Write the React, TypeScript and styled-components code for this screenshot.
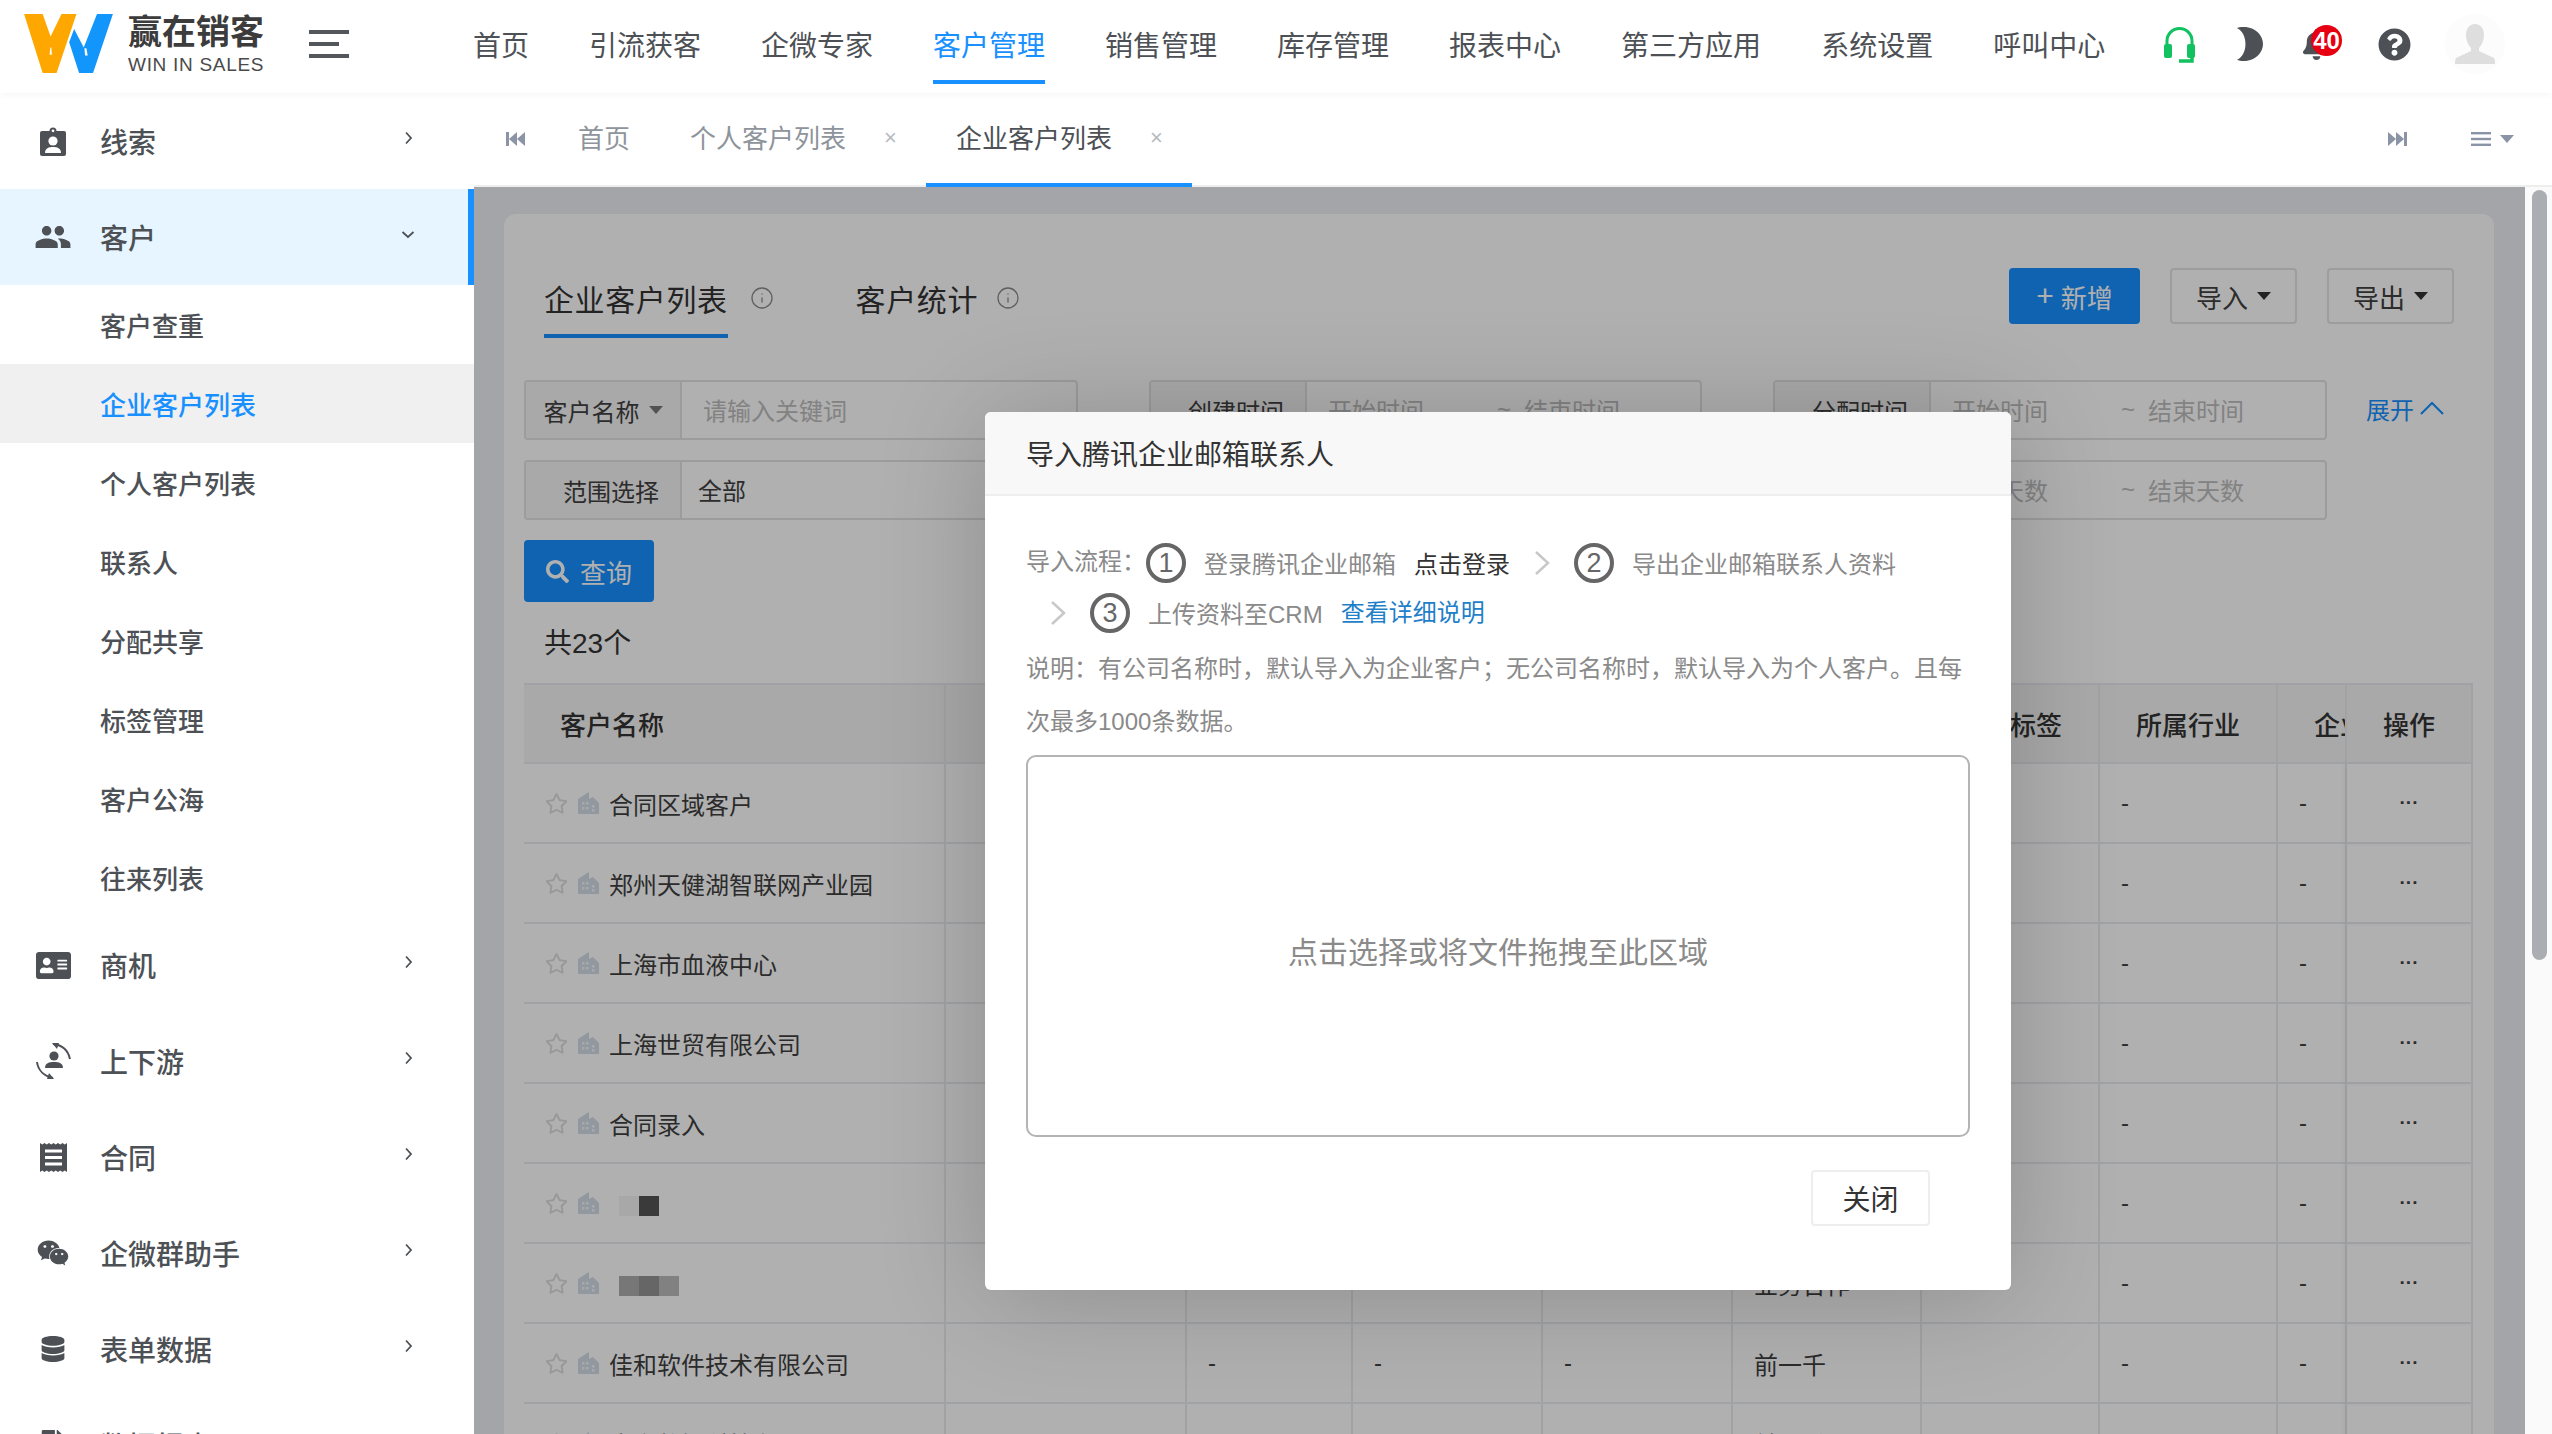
import { ReactElement, ReactNode } from "react";
import styled, { createGlobalStyle } from "styled-components";
import { FaAddressCard, FaBell, FaDatabase, FaFileAlt, FaQuestionCircle, FaRegStar, FaSearch, FaWeixin } from "react-icons/fa";
import { MdPeople } from "react-icons/md";
import { Info } from "lucide-react";

const PRIMARY = "#1890ff";
const INK = "#4d5156";

const NAV_ITEMS = ["首页", "引流获客", "企微专家", "客户管理", "销售管理", "库存管理", "报表中心", "第三方应用", "系统设置", "呼叫中心"];
const SUB_ITEMS = ["客户查重", "企业客户列表", "个人客户列表", "联系人", "分配共享", "标签管理", "客户公海", "往来列表"];
const COLUMNS = [422, 241, 166, 190, 190, 189, 178, 178, 69, 126];
const HEADERS = ["客户名称", "最新跟进时间", "跟进状态", "负责人", "创建人", "客户级别", "客户标签", "所属行业", "企业规模", "操作"];

type Row = { name?: string; mosaic?: string[]; level: string };

const ROWS: Row[] = [
    { name: "合同区域客户", level: "业务合作" },
    { name: "郑州天健湖智联网产业园", level: "业务合作" },
    { name: "上海市血液中心", level: "前一千" },
    { name: "上海世贸有限公司", level: "前一千" },
    { name: "合同录入", level: "业务合作" },
    { mosaic: ["#f4f4f4", "#545454"], level: "业务合作" },
    { mosaic: ["#adadad", "#949494", "#bcbcbc"], level: "业务合作" },
    { name: "佳和软件技术有限公司", level: "前一千" },
    { name: "南京数智科技有限公司", level: "前一千" },
];

const GlobalStyle = createGlobalStyle`
    html, body {
        margin: 0;
        padding: 0;
        height: 100%;
        overflow: hidden;
        background: #fff;
        font-family: "Liberation Sans", "Noto Sans CJK SC", sans-serif;
    }
    * {
        box-sizing: border-box;
    }
`;

function LogoMark(): ReactElement {
    return (
        <svg width="89" height="59" viewBox="42 27 268 178">
            <polygon fill="#fea700" points="42,27 98,27 122,95 155,27 200,27 140,205 98,205" />
            <polygon fill="#fff" points="119,150 126,150 124,128 121,128" />
            <polygon fill="#1396fb" points="178,112 193,72 222,128 262,27 310,27 250,205 208,205" />
            <polygon fill="#fff" points="226,152 234,152 230,130 224,130" />
        </svg>
    );
}

function Burger(): ReactElement {
    return (
        <svg width="40" height="28" viewBox="0 0 40 28" fill="#53565b">
            <rect width="40" height="4" />
            <rect y="12" width="30" height="4" />
            <rect y="24" width="40" height="4" />
        </svg>
    );
}

function Headset(): ReactElement {
    return (
        <svg width="31" height="37" viewBox="0 0 31 37">
            <path d="M3 21 V15 A12.5 12.5 0 0 1 28 15 V21" fill="none" stroke="#12c15f" strokeWidth="3" />
            <rect x="0" y="18" width="8" height="14" rx="2" fill="#12c15f" />
            <rect x="23" y="18" width="8" height="14" rx="2" fill="#12c15f" />
            <path d="M28 30 V35 H15" fill="none" stroke="#12c15f" strokeWidth="3.5" />
        </svg>
    );
}

function Moon(): ReactElement {
    return (
        <svg width="26" height="34" viewBox="262 70 76 98">
            <path fill={INK} d="M262 72 C300 60 338 85 338 119 C338 153 300 178 262 166 C295 150 295 88 262 72Z" />
        </svg>
    );
}

function Avatar(): ReactElement {
    return (
        <svg width="60" height="60" viewBox="0 0 60 60">
            <circle cx="30" cy="30" r="30" fill="#fcfcfc" />
            <path fill="#dedede" d="M30 10 C36 10 39 15 39 21 C39 27 36 32 34 34 V37 L49 44 C50 46 50 48 50 50 H10 C10 48 10 46 11 44 L26 37 V34 C24 32 21 27 21 21 C21 15 24 10 30 10Z" />
        </svg>
    );
}

function BadgeIcon(): ReactElement {
    return (
        <svg width="26" height="29" viewBox="0 0 26 29">
            <path fill={INK} d="M2 4 H9.5 A3.5 3.5 0 0 1 16.5 4 H24 A2 2 0 0 1 26 6 V27 A2 2 0 0 1 24 29 H2 A2 2 0 0 1 0 27 V6 A2 2 0 0 1 2 4Z" />
            <circle cx="13" cy="3.8" r="1.4" fill="#fff" />
            <circle cx="13" cy="14" r="4.6" fill="#fff" />
            <path fill="#fff" d="M5 26 C5 21 9 20 13 20 C17 20 21 21 21 26Z" />
        </svg>
    );
}

function FlowIcon(): ReactElement {
    return (
        <svg width="35" height="36" viewBox="0 0 35 36">
            <circle cx="18" cy="13" r="4.6" fill={INK} />
            <path fill={INK} d="M9 25 C9 20 13 19 18 19 C23 19 27 20 27 25Z" />
            <path d="M17 1 C26 2 32 7 34 16" fill="none" stroke={INK} strokeWidth="2" />
            <polygon fill={INK} points="16,0 23,0 21,6" />
            <path d="M1 19 C2 27 8 33 17 35" fill="none" stroke={INK} strokeWidth="2" />
            <polygon fill={INK} points="18,36 11,36 13,30" />
        </svg>
    );
}

function ReceiptIcon(): ReactElement {
    return (
        <svg width="27" height="29" viewBox="0 0 27 29">
            <path fill={INK} d="M0 0 L2.25 1.5 L4.5 0 L6.75 1.5 L9 0 L11.25 1.5 L13.5 0 L15.75 1.5 L18 0 L20.25 1.5 L22.5 0 L24.75 1.5 L27 0 V29 L24.75 27.5 L22.5 29 L20.25 27.5 L18 29 L15.75 27.5 L13.5 29 L11.25 27.5 L9 29 L6.75 27.5 L4.5 29 L2.25 27.5 L0 29Z" />
            <rect x="5" y="6.5" width="17" height="3" fill="#fff" />
            <rect x="5" y="13" width="17" height="3" fill="#fff" />
            <rect x="5" y="19.5" width="17" height="3" fill="#fff" />
        </svg>
    );
}

function BuildingIcon(): ReactElement {
    return (
        <svg width="21" height="22" viewBox="0 0 21 22">
            <path fill="#d3dde7" d="M0 22 V7 L11 0 V7 L15 5 L21 11 V22Z" />
            <g fill="#f2f5f8">
                <rect x="4" y="10" width="2.5" height="2.5" />
                <rect x="8" y="10" width="2.5" height="2.5" />
                <rect x="4" y="15" width="2.5" height="2.5" />
                <rect x="8" y="15" width="2.5" height="2.5" />
                <rect x="14" y="13" width="2.5" height="2.5" />
                <rect x="14" y="17" width="2.5" height="2.5" />
            </g>
        </svg>
    );
}

function SkipIcon({ flip }: { flip?: boolean }): ReactElement {
    return (
        <svg width="20" height="14" viewBox="0 0 20 14" fill="#8a94a6" style={flip ? { transform: "scaleX(-1)" } : undefined}>
            <rect x="0" y="0" width="3" height="14" />
            <polygon points="11,0 11,14 3,7" />
            <polygon points="19,0 19,14 11,7" />
        </svg>
    );
}

function Chevron({ open }: { open?: boolean }): ReactElement {
    return (
        <ChevronSlot>
            <svg width="14" height="14" viewBox="0 0 14 14" fill="none" stroke={INK} strokeWidth="1.8" style={open ? { transform: "rotate(90deg)" } : undefined}>
                <path d="M5 1.5 L10 7 L5 12.5" />
            </svg>
        </ChevronSlot>
    );
}

function MenuRow({ icon, label, open, active }: { icon: ReactNode; label: string; open?: boolean; active?: boolean }): ReactElement {
    return (
        <SideItem $active={active}>
            <SideIcon>{icon}</SideIcon>
            <SideLabel>{label}</SideLabel>
            <Chevron open={open} />
        </SideItem>
    );
}

function RangeGroup({ label, from, to }: { label: string; from: string; to: string }): ReactElement {
    return (
        <Group>
            <Addon>{label}</Addon>
            <RangeFrom>{from}</RangeFrom>
            <RangeSep>~</RangeSep>
            <RangeTo>{to}</RangeTo>
        </Group>
    );
}

export default function App(): ReactElement {
    return (
        <Shell>
            <GlobalStyle />
            <TopBar>
                <Brand>
                    <LogoMark />
                    <BrandText>
                        <BrandName>赢在销客</BrandName>
                        <BrandSub>WIN IN SALES</BrandSub>
                    </BrandText>
                    <BurgerSlot>
                        <Burger />
                    </BurgerSlot>
                </Brand>
                <Nav>
                    {NAV_ITEMS.map((item: string): ReactElement => (
                        <NavItem key={item} $active={item === "客户管理"}>{item}</NavItem>
                    ))}
                </Nav>
                <Actions>
                    <ActionSlot $gap={0}><Headset /></ActionSlot>
                    <ActionSlot $gap={42}><Moon /></ActionSlot>
                    <BellSlot>
                        <FaBell size={31} color={INK} />
                        <Badge>40</Badge>
                    </BellSlot>
                    <ActionSlot $gap={33}><FaQuestionCircle size={33} color={INK} /></ActionSlot>
                    <ActionSlot $gap={34}><Avatar /></ActionSlot>
                </Actions>
            </TopBar>

            <Body>
                <Sidebar>
                    <MenuRow icon={<BadgeIcon />} label="线索" />
                    <MenuRow icon={<MdPeople size={38} />} label="客户" open active />
                    {SUB_ITEMS.map((item: string): ReactElement => (
                        <SubItem key={item} $active={item === "企业客户列表"}>{item}</SubItem>
                    ))}
                    <MenuRow icon={<FaAddressCard size={35} />} label="商机" />
                    <MenuRow icon={<FlowIcon />} label="上下游" />
                    <MenuRow icon={<ReceiptIcon />} label="合同" />
                    <MenuRow icon={<FaWeixin size={32} />} label="企微群助手" />
                    <MenuRow icon={<FaDatabase size={26} />} label="表单数据" />
                    <MenuRow icon={<FaFileAlt size={30} />} label="数据报表" />
                </Sidebar>

                <Main>
                    <TabBar>
                        <TabArrow><SkipIcon /></TabArrow>
                        <TabItem>首页</TabItem>
                        <TabItem>
                            个人客户列表
                            <TabClose>×</TabClose>
                        </TabItem>
                        <TabItem $active>
                            企业客户列表
                            <TabClose>×</TabClose>
                        </TabItem>
                        <TabRight>
                            <SkipIcon flip />
                            <TabMenu>
                                <svg width="20" height="14" viewBox="0 0 20 14" fill="#8a94a6">
                                    <rect width="20" height="2.4" />
                                    <rect y="5.8" width="20" height="2.4" />
                                    <rect y="11.6" width="20" height="2.4" />
                                </svg>
                                <Caret $color="#8a94a6" />
                            </TabMenu>
                        </TabRight>
                    </TabBar>

                    <Workspace>
                        <ContentArea>
                            <Card>
                                <CardHead>
                                    <CardTab $active>企业客户列表</CardTab>
                                    <TabInfo $pad={22}><Info size={24} strokeWidth={1.3} /></TabInfo>
                                    <CardTab>客户统计</CardTab>
                                    <TabInfo $pad={18}><Info size={24} strokeWidth={1.3} /></TabInfo>
                                    <HeadActions>
                                        <PrimaryButton><PlusSign>+</PlusSign>新增</PrimaryButton>
                                        <GhostButton>导入<Caret /></GhostButton>
                                        <GhostButton>导出<Caret /></GhostButton>
                                    </HeadActions>
                                </CardHead>

                                <FilterGrid>
                                    <Group>
                                        <Addon $flush>客户名称<Caret $color="#777" /></Addon>
                                        <Placeholder>请输入关键词</Placeholder>
                                    </Group>
                                    <RangeGroup label="创建时间" from="开始时间" to="结束时间" />
                                    <RangeGroup label="分配时间" from="开始时间" to="结束时间" />
                                    <ExpandLink>
                                        展开
                                        <svg width="24" height="14" viewBox="0 0 24 14" fill="none" stroke={PRIMARY} strokeWidth="2">
                                            <path d="M1 13 L12 2 L23 13" />
                                        </svg>
                                    </ExpandLink>
                                    <Group>
                                        <Addon>范围选择</Addon>
                                        <SelectValue>全部</SelectValue>
                                    </Group>
                                    <RangeGroup label="跟进时间" from="开始时间" to="结束时间" />
                                    <RangeGroup label="未跟进天数" from="开始天数" to="结束天数" />
                                </FilterGrid>

                                <QueryButton>
                                    <FaSearch size={23} />
                                    查询
                                </QueryButton>
                                <Total>共23个</Total>

                                <Table>
                                    <colgroup>
                                        {COLUMNS.map((width: number, i: number): ReactElement => (
                                            <col key={i} width={width} />
                                        ))}
                                    </colgroup>
                                    <thead>
                                        <tr>
                                            {HEADERS.map((header: string, i: number): ReactElement => (
                                                <HeadCell key={header} $align={i === 0 ? "left" : i === 8 ? "clip" : "center"}>{header}</HeadCell>
                                            ))}
                                        </tr>
                                    </thead>
                                    <tbody>
                                        {ROWS.map((row: Row, i: number): ReactElement => (
                                            <tr key={i}>
                                                <Cell>
                                                    <NameWrap>
                                                        <FaRegStar size={23} color="#dcdcdc" />
                                                        <BuildingIcon />
                                                        {row.name ? <span>{row.name}</span> : (
                                                            <Mosaic>
                                                                {row.mosaic?.map((shade: string, j: number): ReactElement => (
                                                                    <MosaicCell key={j} $shade={shade} />
                                                                ))}
                                                            </Mosaic>
                                                        )}
                                                    </NameWrap>
                                                </Cell>
                                                <Cell />
                                                <Cell>-</Cell>
                                                <Cell>-</Cell>
                                                <Cell>-</Cell>
                                                <Cell>{row.level}</Cell>
                                                <Cell />
                                                <Cell>-</Cell>
                                                <Cell>-</Cell>
                                                <OpCell>···</OpCell>
                                            </tr>
                                        ))}
                                    </tbody>
                                </Table>
                            </Card>

                            <Overlay>
                                <Modal>
                                    <ModalHead>导入腾讯企业邮箱联系人</ModalHead>
                                    <ModalBody>
                                        <StepRow>
                                            <StepLabel>导入流程：</StepLabel>
                                            <StepNo>1</StepNo>
                                            <span>登录腾讯企业邮箱</span>
                                            <StepAction>点击登录</StepAction>
                                            <StepArrow><path d="M2 1 L14 12 L2 23" /></StepArrow>
                                            <StepNo>2</StepNo>
                                            <span>导出企业邮箱联系人资料</span>
                                        </StepRow>
                                        <StepRow $indent>
                                            <StepArrow><path d="M2 1 L14 12 L2 23" /></StepArrow>
                                            <StepNo>3</StepNo>
                                            <span>上传资料至CRM</span>
                                            <StepLink>查看详细说明</StepLink>
                                        </StepRow>
                                        <Note>说明：有公司名称时，默认导入为企业客户；无公司名称时，默认导入为个人客户。且每次最多1000条数据。</Note>
                                        <DropZone>点击选择或将文件拖拽至此区域</DropZone>
                                        <ModalFoot>
                                            <CloseButton>关闭</CloseButton>
                                        </ModalFoot>
                                    </ModalBody>
                                </Modal>
                            </Overlay>
                        </ContentArea>
                        <Gutter>
                            <Thumb />
                        </Gutter>
                    </Workspace>
                </Main>
            </Body>
        </Shell>
    );
}

const Shell = styled.div`
    height: 100vh;
    display: flex;
    flex-direction: column;
    overflow: hidden;
`;

const TopBar = styled.header`
    height: 93px;
    flex: none;
    display: flex;
    align-items: flex-start;
    background: #fff;
    box-shadow: 0 2px 6px rgba(0, 0, 0, 0.04);
    position: relative;
    z-index: 2;
`;

const Brand = styled.div`
    width: 473px;
    flex: none;
    display: flex;
    align-items: flex-start;
    padding: 14px 0 0 24px;
`;

const BrandText = styled.div`
    margin-left: 15px;
    width: 136px;
`;

const BrandName = styled.div`
    font-size: 34px;
    line-height: 36px;
    font-weight: 700;
    color: #3c3c3c;
    white-space: nowrap;
`;

const BrandSub = styled.div`
    margin-top: 6px;
    font-size: 19px;
    line-height: 18px;
    letter-spacing: 0.7px;
    color: #4a4a4a;
    white-space: nowrap;
`;

const BurgerSlot = styled.div`
    margin: 16px 0 0 45px;
    line-height: 0;
`;

const Nav = styled.nav`
    display: flex;
    gap: 60px;
`;

const NavItem = styled.div<{ $active?: boolean }>`
    height: 84px;
    padding-top: 8px;
    display: flex;
    align-items: center;
    font-size: 28px;
    white-space: nowrap;
    color: ${(p) => (p.$active ? PRIMARY : INK)};
    border-bottom: 4px solid ${(p) => (p.$active ? PRIMARY : "transparent")};
`;

const Actions = styled.div`
    margin-left: auto;
    padding: 14px 47px 0 0;
    height: 74px;
    display: flex;
    align-items: center;
`;

const ActionSlot = styled.div<{ $gap: number }>`
    margin-left: ${(p) => p.$gap}px;
    display: flex;
    line-height: 0;
`;

const BellSlot = styled.div`
    position: relative;
    margin-left: 38px;
    width: 44px;
    height: 36px;
    display: flex;
    align-items: center;
`;

const Badge = styled.span`
    position: absolute;
    left: 10px;
    top: -1px;
    width: 31px;
    height: 31px;
    border-radius: 50%;
    background: #e60012;
    color: #fff;
    font-size: 24px;
    font-weight: 700;
    line-height: 31px;
    text-align: center;
`;

const Body = styled.div`
    flex: 1;
    min-height: 0;
    display: flex;
`;

const Sidebar = styled.aside`
    width: 474px;
    flex: none;
    overflow: hidden;
    background: #fff;
`;

const SideItem = styled.div<{ $active?: boolean }>`
    height: 96px;
    display: flex;
    align-items: center;
    padding-left: 33px;
    color: ${INK};
    background: ${(p) => (p.$active ? "#e6f5ff" : "#fff")};
    border-right: 6px solid ${(p) => (p.$active ? PRIMARY : "transparent")};
`;

const SideIcon = styled.div`
    width: 40px;
    flex: none;
    display: flex;
    justify-content: center;
    color: ${INK};
`;

const SideLabel = styled.span`
    margin-left: 27px;
    font-size: 28px;
    font-weight: 500;
`;

const ChevronSlot = styled.div`
    position: absolute;
    left: 401px;
    margin-top: -6px;
    line-height: 0;
`;

const SubItem = styled.div<{ $active?: boolean }>`
    height: 79px;
    display: flex;
    align-items: center;
    padding-left: 100px;
    font-size: 26px;
    font-weight: 500;
    color: ${(p) => (p.$active ? PRIMARY : INK)};
    background: ${(p) => (p.$active ? "#f0f0f0" : "#fff")};
`;

const Main = styled.main`
    flex: 1;
    min-width: 0;
    display: flex;
    flex-direction: column;
`;

const TabBar = styled.div`
    height: 94px;
    flex: none;
    display: flex;
    align-items: stretch;
    padding-left: 32px;
    background: #fff;
    border-bottom: 2px solid #eeeeee;
`;

const TabArrow = styled.div`
    display: flex;
    align-items: center;
    margin-right: 22px;
`;

const TabItem = styled.div<{ $active?: boolean }>`
    height: 94px;
    padding: 0 30px 4px;
    display: flex;
    align-items: center;
    font-size: 26px;
    white-space: nowrap;
    color: ${(p) => (p.$active ? INK : "#8e949b")};
    border-bottom: 4px solid ${(p) => (p.$active ? PRIMARY : "transparent")};
`;

const TabClose = styled.span`
    margin: 3px -1px 0 38px;
    font-size: 22px;
    line-height: 1;
    color: #b5bac0;
`;

const TabRight = styled.div`
    margin-left: auto;
    padding-right: 38px;
    display: flex;
    align-items: center;
    gap: 64px;
`;

const TabMenu = styled.div`
    display: flex;
    align-items: center;
`;

const Caret = styled.span<{ $color?: string }>`
    display: inline-block;
    margin-left: 9px;
    flex: none;
    border-style: solid;
    border-width: 8px 7.5px 0;
    border-color: ${(p) => p.$color ?? "#333"} transparent transparent;
`;

const Workspace = styled.div`
    flex: 1;
    min-height: 0;
    display: flex;
`;

const ContentArea = styled.div`
    position: relative;
    flex: 1;
    min-width: 0;
    overflow: hidden;
    padding: 27px 31px 0 30px;
    background: #ecf0f5;
`;

const Gutter = styled.div`
    width: 27px;
    flex: none;
    padding: 3px 5px 0 7px;
    background: #fafafa;
`;

const Thumb = styled.div`
    height: 770px;
    border-radius: 8px;
    background: #aaadb1;
`;

const Card = styled.section`
    background: #fff;
    border-radius: 12px 12px 0 0;
    padding: 54px 21px 0 20px;
    min-height: 1300px;
`;

const CardHead = styled.div`
    height: 70px;
    display: flex;
    align-items: flex-start;
    margin-bottom: 42px;
`;

const CardTab = styled.div<{ $active?: boolean }>`
    height: 70px;
    margin-left: 20px;
    padding-bottom: 6px;
    display: flex;
    align-items: center;
    font-size: 30px;
    letter-spacing: 0.6px;
    color: #333;
    border-bottom: 4px solid ${(p) => (p.$active ? PRIMARY : "transparent")};

    & ~ & {
        margin-left: 0;
    }
`;

const TabInfo = styled.div<{ $pad: number }>`
    width: 128px;
    height: 60px;
    padding-left: ${(p) => p.$pad}px;
    display: flex;
    align-items: center;
    color: #8a8a8a;
`;

const HeadActions = styled.div`
    margin-left: auto;
    margin-right: 19px;
    display: flex;
    gap: 30px;
`;

const PrimaryButton = styled.button`
    width: 131px;
    height: 56px;
    padding: 0;
    border: 0;
    border-radius: 4px;
    display: flex;
    align-items: center;
    justify-content: center;
    background: ${PRIMARY};
    color: #fff;
    font: inherit;
    font-size: 26px;
`;

const PlusSign = styled.span`
    margin-right: 7px;
    font-size: 30px;
    line-height: 1;
`;

const GhostButton = styled.button`
    width: 127px;
    height: 56px;
    padding: 0;
    border: 2px solid #e4e4e4;
    border-radius: 4px;
    display: flex;
    align-items: center;
    justify-content: center;
    background: #fff;
    color: #404040;
    font: inherit;
    font-size: 26px;
`;

const FilterGrid = styled.div`
    display: grid;
    grid-template-columns: 554px 553px 554px auto;
    column-gap: 71px;
    row-gap: 20px;
    align-items: center;
`;

const Group = styled.div`
    height: 60px;
    display: flex;
    align-items: center;
    border: 2px solid #e2e2e2;
    border-radius: 4px;
    font-size: 24px;
    white-space: nowrap;
    overflow: hidden;
`;

const Addon = styled.div<{ $flush?: boolean }>`
    width: 156px;
    height: 100%;
    flex: none;
    padding-left: ${(p) => (p.$flush ? 0 : 16)}px;
    display: flex;
    align-items: center;
    justify-content: center;
    background: #f5f5f5;
    border-right: 2px solid #e2e2e2;
    color: #404040;
`;

const Placeholder = styled.span`
    margin: 0 0 2px 21px;
    color: #bdbdbd;
`;

const SelectValue = styled.span`
    margin: 0 0 2px 16px;
    color: #404040;
`;

const RangeFrom = styled(Placeholder)`
    width: 169px;
`;

const RangeSep = styled.span`
    color: #bdbdbd;
`;

const RangeTo = styled(Placeholder)`
    margin-left: 13px;
`;

const ExpandLink = styled.div`
    margin: 0 0 4px -32px;
    display: flex;
    align-items: center;
    gap: 6px;
    font-size: 24px;
    color: ${PRIMARY};
`;

const QueryButton = styled.button`
    width: 130px;
    height: 62px;
    margin-top: 20px;
    padding: 0;
    border: 0;
    border-radius: 4px;
    display: flex;
    align-items: center;
    justify-content: center;
    gap: 11px;
    background: ${PRIMARY};
    color: #fff;
    font: inherit;
    font-size: 26px;
`;

const Total = styled.div`
    margin: 22px 0 19px 20px;
    font-size: 28px;
    line-height: 40px;
    color: #333;
`;

const Table = styled.table`
    width: 1949px;
    table-layout: fixed;
    border-collapse: separate;
    border-spacing: 0;
    border-top: 2px solid #e8ebef;
`;

const HeadCell = styled.th<{ $align: "left" | "center" | "clip" }>`
    height: 79px;
    padding: ${(p) => (p.$align === "center" ? "0" : "0 0 0 36px")};
    text-align: ${(p) => (p.$align === "center" ? "center" : "left")};
    font-size: 26px;
    font-weight: 500;
    color: #333;
    white-space: nowrap;
    overflow: hidden;
    background: #f5f5f5;
    border-right: 2px solid #e8ebef;
    border-bottom: 2px solid #e8ebef;
`;

const Cell = styled.td`
    height: 80px;
    padding: 0 0 0 21px;
    font-size: 24px;
    color: #3f3f3f;
    white-space: nowrap;
    overflow: hidden;
    border-right: 2px solid #e8ebef;
    border-bottom: 2px solid #e8ebef;
`;

const OpCell = styled(Cell)`
    padding-left: 0;
    text-align: center;
    font-size: 19px;
    font-weight: 700;
    box-shadow: -3px 0 5px rgba(0, 0, 0, 0.04);
`;

const NameWrap = styled.div`
    display: flex;
    align-items: center;
    gap: 10px;
`;

const Mosaic = styled.div`
    display: flex;
    height: 20px;
    margin: 6px 0 0 10px;
`;

const MosaicCell = styled.div<{ $shade: string }>`
    width: 20px;
    background: ${(p) => p.$shade};
`;

const Overlay = styled.div`
    position: absolute;
    inset: 0;
    padding: 225px 3px 0 0;
    display: flex;
    justify-content: center;
    align-items: flex-start;
    background: rgba(0, 0, 0, 0.31);
`;

const Modal = styled.div`
    width: 1026px;
    height: 878px;
    flex: none;
    border-radius: 6px;
    overflow: hidden;
    background: #fff;
    box-shadow: 0 6px 110px rgba(0, 0, 0, 0.2);
`;

const ModalHead = styled.div`
    height: 84px;
    padding-left: 41px;
    display: flex;
    align-items: center;
    font-size: 28px;
    color: #333;
    background: #f8f8f8;
    border-bottom: 2px solid #eeeeee;
`;

const ModalBody = styled.div`
    padding: 42px 41px 0;
`;

const StepRow = styled.div<{ $indent?: boolean }>`
    height: 50px;
    padding-left: ${(p) => (p.$indent ? 18 : 0)}px;
    display: flex;
    align-items: center;
    gap: 18px;
    font-size: 24px;
    color: #8a8a8a;
    white-space: nowrap;

    & > span {
        margin-bottom: 2px;
    }
`;

const StepLabel = styled.div`
    margin: 0 -18px 8px 0;
`;

const StepNo = styled.div`
    width: 40px;
    height: 40px;
    flex: none;
    border: 4px solid #666;
    border-radius: 50%;
    display: flex;
    align-items: center;
    justify-content: center;
    font-size: 27px;
    color: #666;
`;

const StepAction = styled.span`
    color: #333;
`;

const StepArrow = styled.svg.attrs({ viewBox: "0 0 16 24", width: 16, height: 24 })`
    margin: 0 6px;
    flex: none;
    fill: none;
    stroke: #c8c8c8;
    stroke-width: 2.5;
`;

const StepLink = styled.div`
    margin-bottom: 6px;
    color: #1f7fc9;
`;

const Note = styled.p`
    margin: 4px 0 0;
    font-size: 24px;
    line-height: 53px;
    color: #8a8a8a;
`;

const DropZone = styled.div`
    height: 382px;
    margin-top: 7px;
    padding-top: 8px;
    display: flex;
    align-items: center;
    justify-content: center;
    border: 2px solid #b4b4b4;
    border-radius: 10px;
    font-size: 30px;
    color: #8a8a8a;
`;

const ModalFoot = styled.div`
    margin-top: 33px;
    padding-right: 40px;
    display: flex;
    justify-content: flex-end;
`;

const CloseButton = styled.button`
    width: 119px;
    height: 56px;
    border: 2px solid #eeeeee;
    border-radius: 4px;
    background: #fff;
    color: #333;
    font: inherit;
    font-size: 28px;
`;
